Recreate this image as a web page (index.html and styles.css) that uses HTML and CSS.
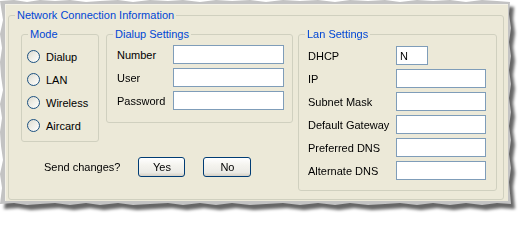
FILE: index.html
```html
<!DOCTYPE html>
<html lang="en">
<head>
<meta charset="utf-8">
<title>Network Connection Information</title>
<link rel="stylesheet" href="styles.css">
</head>
<body>
<div class="shadow-wrap">
  <div class="frame">
    <div class="panel">
      <fieldset class="group outer">
        <legend class="group-title">Network Connection Information</legend>
        <div class="outer-body">
          <div class="left-col">
            <div class="top-row">
              <fieldset class="group mode">
                <legend class="group-title">Mode</legend>
                <div class="mode-body">
                  <div class="radio-row"><span class="radio"></span><span>Dialup</span></div>
                  <div class="radio-row"><span class="radio"></span><span>LAN</span></div>
                  <div class="radio-row"><span class="radio"></span><span>Wireless</span></div>
                  <div class="radio-row"><span class="radio"></span><span>Aircard</span></div>
                </div>
              </fieldset>
              <fieldset class="group dialup">
                <legend class="group-title">Dialup Settings</legend>
                <div class="dialup-body">
                  <div class="field-row"><span class="dial-label">Number</span><input class="text-input dial-input" type="text"></div>
                  <div class="field-row"><span class="dial-label">User</span><input class="text-input dial-input" type="text"></div>
                  <div class="field-row"><span class="dial-label">Password</span><input class="text-input dial-input" type="text"></div>
                </div>
              </fieldset>
            </div>
            <div class="send-row">
              <span class="send-label">Send changes?</span>
              <button class="btn btn-yes" type="button">Yes</button>
              <button class="btn btn-no" type="button">No</button>
            </div>
          </div>
          <fieldset class="group lan">
            <legend class="group-title">Lan Settings</legend>
            <div class="lan-body">
              <div class="field-row"><span class="lan-label">DHCP</span><input class="text-input short-input" type="text" value="N"></div>
              <div class="field-row"><span class="lan-label">IP</span><input class="text-input lan-input" type="text"></div>
              <div class="field-row"><span class="lan-label">Subnet Mask</span><input class="text-input lan-input" type="text"></div>
              <div class="field-row"><span class="lan-label">Default Gateway</span><input class="text-input lan-input" type="text"></div>
              <div class="field-row"><span class="lan-label">Preferred DNS</span><input class="text-input lan-input" type="text"></div>
              <div class="field-row"><span class="lan-label">Alternate DNS</span><input class="text-input lan-input" type="text"></div>
            </div>
          </fieldset>
        </div>
      </fieldset>
    </div>
  </div>
</div>
</body>
</html>
```

FILE: styles.css
```css
html, body {
  margin: 0;
  padding: 0;
  background: #ffffff;
}

body {
  width: 521px;
  height: 215px;
  overflow: hidden;
  font-family: "Liberation Sans", Arial, sans-serif;
  font-size: 11px;
  color: #000000;
}

.shadow-wrap {
  width: 511px;
  height: 205px;
  filter: drop-shadow(4px 5px 1.5px rgba(0, 0, 0, 0.6));
}

.frame {
  box-sizing: border-box;
  width: 511px;
  height: 205px;
  padding: 4px 3px 4px 5px;
  background: #c3c3c3;
  clip-path: polygon(0px 1px, 14px 0px, 27px 2px, 40px 0px, 55px 1px, 70px 0px, 86px 2px, 100px 1px, 118px 0px, 133px 2px, 150px 0px, 168px 1px, 183px 0px, 200px 2px, 216px 0px, 232px 1px, 250px 0px, 266px 2px, 283px 0px, 300px 1px, 318px 0px, 335px 2px, 350px 0px, 368px 1px, 385px 0px, 400px 2px, 417px 0px, 433px 1px, 450px 0px, 466px 2px, 482px 0px, 497px 1px, 510px 2px,
    509px 14px, 511px 28px, 509px 42px, 511px 56px, 509px 70px, 511px 84px, 509px 98px, 511px 112px, 509px 126px, 511px 140px, 509px 154px, 511px 168px, 509px 182px, 511px 204px,
    497px 203px, 482px 205px, 466px 203px, 450px 205px, 433px 203px, 417px 205px, 400px 203px, 385px 204px, 368px 205px, 350px 203px, 335px 205px, 318px 203px, 300px 205px, 283px 203px, 266px 204px, 250px 205px, 232px 203px, 216px 205px, 200px 203px, 183px 205px, 168px 203px, 150px 204px, 133px 205px, 118px 203px, 100px 205px, 86px 203px, 70px 205px, 55px 203px, 40px 204px, 27px 205px, 14px 203px, 0px 204px,
    2px 188px, 0px 174px, 3px 160px, 1px 146px, 0px 132px, 2px 118px, 0px 104px, 3px 90px, 1px 76px, 0px 62px, 2px 48px, 0px 34px, 3px 20px);
}

.panel {
  box-sizing: border-box;
  width: 503px;
  height: 197px;
  padding: 4px 4px 0 3px;
  background: #ece9d8;
  border-top: 1px solid #f3f1e7;
  border-left: 1px solid #f3f1e7;
}

.group {
  margin: 0;
  padding: 0;
  min-width: 0;
  border: 1px solid #d0d0bf;
  border-radius: 3px;
}

.group-title {
  margin-left: 6px;
  padding: 0 2px;
  line-height: 13px;
  color: #0046d5;
}

.outer {
  width: 496px;
  box-sizing: border-box;
  margin-left: -1px;
}

.outer-body {
  display: flex;
  align-items: flex-start;
  gap: 5px;
  padding: 6px 6px 8px 12px;
}

.left-col {
  display: flex;
  flex-direction: column;
  width: 272px;
}

.top-row {
  display: flex;
  align-items: flex-start;
  gap: 7px;
}

.mode {
  box-sizing: border-box;
  width: 78px;
}

.mode-body {
  padding: 4px 0 4px 5px;
}

.radio-row {
  display: flex;
  align-items: center;
  height: 23px;
}

.radio {
  box-sizing: border-box;
  width: 13px;
  height: 13px;
  margin-right: 6px;
  border: 1px solid #1c5180;
  border-radius: 50%;
  background: linear-gradient(135deg, #dcdad0 0%, #eeede6 45%, #ffffff 100%);
}

.dialup {
  box-sizing: border-box;
  width: 187px;
}

.dialup-body {
  padding: 2px 8px 10px 10px;
}

.field-row {
  display: flex;
  align-items: center;
  height: 23px;
}

.dial-label {
  width: 56px;
}

.text-input {
  box-sizing: border-box;
  height: 19px;
  margin: 0;
  padding: 0 3px;
  border: 1px solid #7f9db9;
  border-radius: 0;
  background: #ffffff;
  font-family: "Liberation Sans", Arial, sans-serif;
  font-size: 11px;
  color: #000000;
  outline: none;
}

.dial-input {
  width: 111px;
}

.lan {
  box-sizing: border-box;
  width: 199px;
}

.lan-body {
  padding: 3px 10px 8px 9px;
}

.lan-label {
  width: 88px;
}

.short-input {
  width: 32px;
}

.lan-input {
  width: 90px;
}

.send-row {
  display: flex;
  align-items: center;
  gap: 18px;
  margin-top: 15px;
  padding-left: 23px;
}

.btn {
  box-sizing: border-box;
  height: 20px;
  margin: 0;
  padding: 0;
  border: 1px solid #003c74;
  border-radius: 3px;
  background: linear-gradient(#ffffff 0%, #f4f3ee 40%, #ecebe6 80%, #d6d0c5 100%);
  font-family: "Liberation Sans", Arial, sans-serif;
  font-size: 11px;
  color: #000000;
}

.btn-yes {
  width: 47px;
}

.btn-no {
  width: 48px;
}
```
